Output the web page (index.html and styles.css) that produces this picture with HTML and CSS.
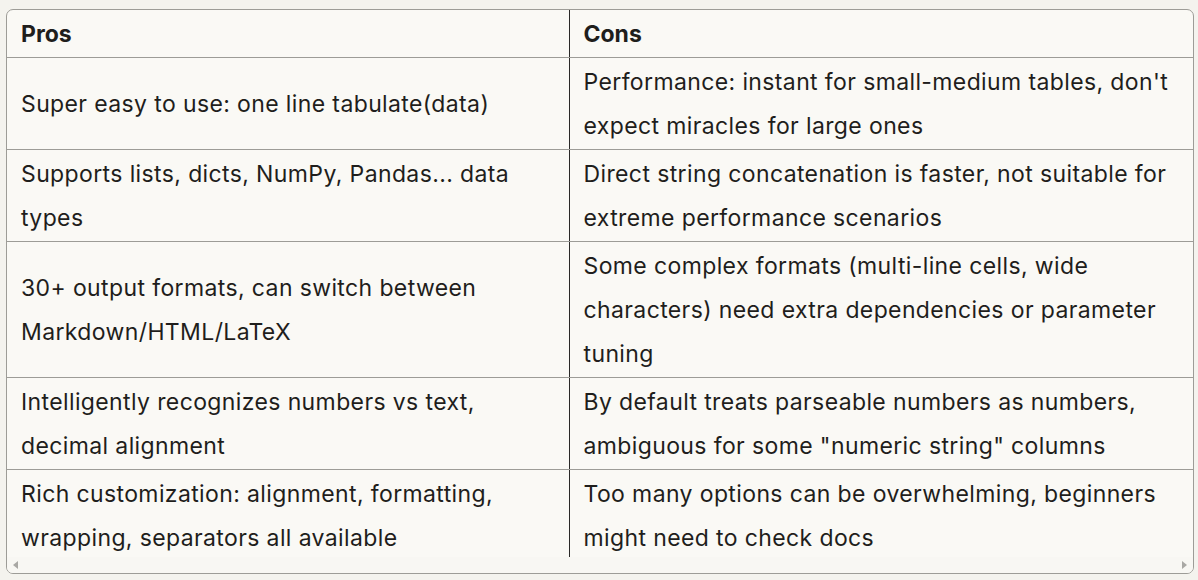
FILE: index.html
```html
<!DOCTYPE html>
<html lang="en">
<head>
<meta charset="utf-8">
<title>Pros and Cons</title>
<link rel="stylesheet" href="styles.css">
</head>
<body>
<div class="table-box">
  <div class="table-viewport">
    <table class="pc-table">
      <colgroup>
        <col class="col-pros">
        <col class="col-cons">
      </colgroup>
      <thead>
        <tr><th>Pros</th><th>Cons</th></tr>
      </thead>
      <tbody>
        <tr>
          <td>Super easy to use: one line tabulate(data)</td>
          <td>Performance: instant for small-medium tables, don't expect miracles for large ones</td>
        </tr>
        <tr>
          <td>Supports lists, dicts, NumPy, Pandas... data types</td>
          <td>Direct string concatenation is faster, not suitable for extreme performance scenarios</td>
        </tr>
        <tr>
          <td>30+ output formats, can switch between Markdown/HTML/LaTeX</td>
          <td>Some complex formats (multi-line cells, wide characters) need extra dependencies or parameter tuning</td>
        </tr>
        <tr>
          <td>Intelligently recognizes numbers vs text, decimal alignment</td>
          <td>By default treats parseable numbers as numbers, ambiguous for some "numeric string" columns</td>
        </tr>
        <tr>
          <td>Rich customization: alignment, formatting, wrapping, separators all available</td>
          <td>Too many options can be overwhelming, beginners might need to check docs</td>
        </tr>
      </tbody>
    </table>
  </div>
  <div class="hscroll">
    <span class="arrow arrow-left"></span>
    <span class="arrow arrow-right"></span>
  </div>
</div>
</body>
</html>
```
FILE: styles.css
```css
html, body {
  margin: 0;
  background: #f4f3ee;
}
body {
  padding: 9px 4px 6px 6px;
  font-family: Inter, "Liberation Sans", sans-serif;
  color: #1f1e1c;
}
.table-box {
  width: 1186px;
  height: 563px;
  border: 1px solid #9d9c97;
  border-radius: 7px;
  background: #faf9f5;
  overflow: hidden;
  display: flex;
  flex-direction: column;
}
.table-viewport {
  flex: 1;
  overflow: hidden;
}
.pc-table {
  width: 1186px;
  border-collapse: collapse;
  table-layout: fixed;
}
.col-pros { width: 562px; }
.col-cons { width: 624px; }
.pc-table th,
.pc-table td {
  padding: 1.5px 14px;
  font-size: 23px;
  line-height: 44px;
  letter-spacing: 0.38px;
  text-align: left;
  vertical-align: middle;
  border-bottom: 1px solid #9d9c97;
}
.pc-table th {
  font-weight: 700;
  letter-spacing: 0;
}
.pc-table td {
  font-weight: 400;
}
.pc-table th + th,
.pc-table td + td {
  border-left: 1px solid #2a2927;
}
.pc-table tbody tr:last-child td {
  border-bottom: none;
}
.hscroll {
  height: 16px;
  flex: none;
  display: flex;
  align-items: center;
  justify-content: space-between;
  padding: 0 6px;
  background: #f8f7f3;
}
.arrow {
  width: 0;
  height: 0;
  border-top: 4px solid transparent;
  border-bottom: 4px solid transparent;
}
.arrow-left {
  border-right: 5px solid #a9a8a4;
}
.arrow-right {
  border-left: 5px solid #a9a8a4;
}
```
